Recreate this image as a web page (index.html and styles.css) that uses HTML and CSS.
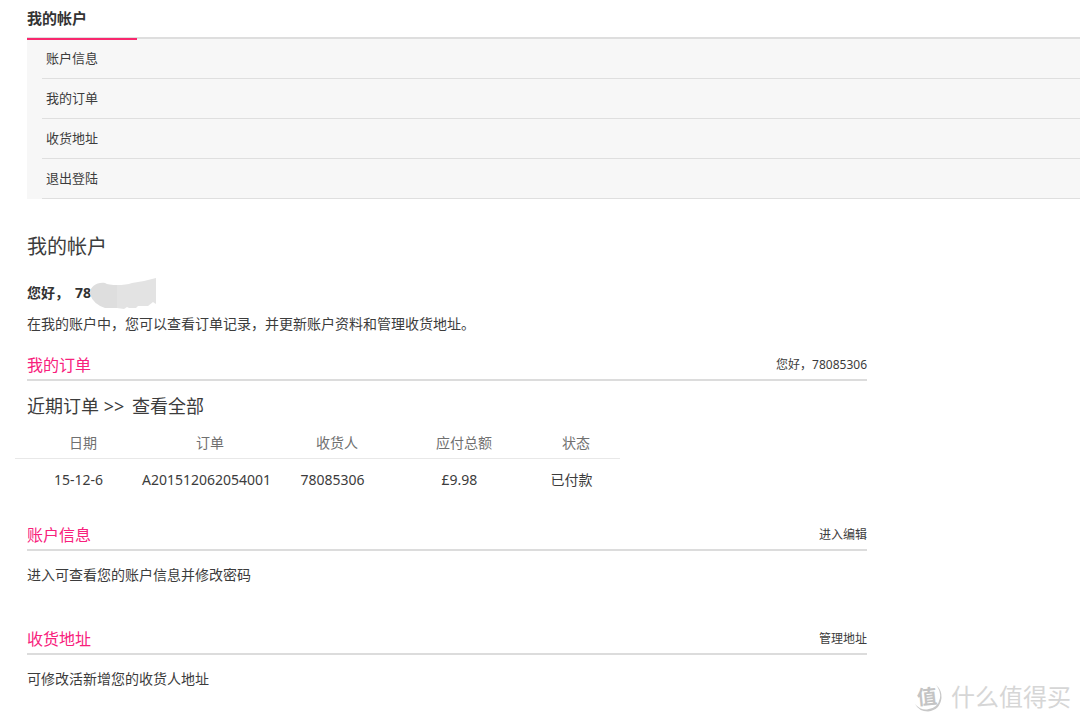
FILE: index.html
```html
<!DOCTYPE html>
<html lang="zh-CN">
<head>
<meta charset="utf-8">
<title>我的帐户</title>
<link rel="stylesheet" href="styles.css">
</head>
<body>
<nav class="side" aria-label="我的帐户">
  <div class="side-head"><span class="side-tab">我的帐户</span></div>
  <ul class="side-list">
    <li><a href="#info">账户信息</a></li>
    <li><a href="#orders">我的订单</a></li>
    <li><a href="#address">收货地址</a></li>
    <li><a href="#logout">退出登陆</a></li>
  </ul>
</nav>
<main class="main">
  <h1 class="title">我的帐户</h1>
  <p class="hello">您好，<span class="masked">78<svg class="mask" width="68" height="32" viewBox="0 0 68 32" aria-hidden="true"><path fill="#dedede" d="M1 16C1 8 8 4 16 5Q19 7 29 7V30H16Q4 26 1 16Z"/><path fill="#e3e3e3" d="M28 7Q37 7 43 5L55 3L67 0V26L64 24L59 28L49 28L47 30H40L38 29L35 31L28 30Z"/></svg></span></p>
  <p class="text">在我的账户中，您可以查看订单记录，并更新账户资料和管理收货地址。</p>

  <section class="orders" id="orders">
    <header class="bar"><h2>我的订单</h2><span class="bar-side">您好，78085306</span></header>
    <h3 class="recent">近期订单 &gt;&gt; <a href="#all">查看全部</a></h3>
    <table class="table">
      <thead><tr><th>日期</th><th>订单</th><th>收货人</th><th>应付总额</th><th class="state">状态</th></tr></thead>
      <tbody><tr><td>15-12-6</td><td>A201512062054001</td><td>78085306</td><td>£9.98</td><td>已付款</td></tr></tbody>
    </table>
  </section>

  <section class="block" id="info">
    <header class="bar"><h2>账户信息</h2><a class="bar-side" href="#edit">进入编辑</a></header>
    <p class="text">进入可查看您的账户信息并修改密码</p>
  </section>

  <section class="block" id="address">
    <header class="bar"><h2>收货地址</h2><a class="bar-side" href="#manage">管理地址</a></header>
    <p class="text">可修改活新增您的收货人地址</p>
  </section>
</main>
<div class="watermark">
  <svg class="seal" width="30" height="32" viewBox="0 0 30 32" role="img" aria-label="值">
    <path fill="#c8c8c8" d="M23 4Q29 9 28.500 17Q27 29 15 30.500Q6 30.500 2 23Q7 29 14 28.500Q25 27.500 27 17Q28 10 23 4Z"/>
    <text x="14" y="23" text-anchor="middle" transform="rotate(-6 14 16)">值</text>
  </svg>
  <span class="brand">什么值得买</span>
</div>
</body>
</html>
```
FILE: styles.css
```css
* { box-sizing: border-box; }
body {
  margin: 0;
  padding-left: 27px;
  background: #fff;
  color: #3c3c3c;
  font: 14px/24px "Noto Sans", "Noto Sans CJK SC", sans-serif;
}
h1, h2, h3, p, ul { margin: 0; padding: 0; font-weight: 400; }
a { color: inherit; text-decoration: none; }

.side-head {
  border-bottom: 2px solid #dedede;
  color: #333;
  font-size: 15px;
  font-weight: 700;
  line-height: 37px;
}
.side-tab { position: relative; display: block; width: 110px; }
.side-tab::after {
  content: "";
  position: absolute;
  left: 0;
  right: 0;
  bottom: -3px;
  height: 2px;
  background: #f8286e;
}
.side-list { padding-left: 15px; background: #f7f7f7; list-style: none; }
.side-list li {
  padding-left: 4px;
  border-bottom: 1px solid #dfdfdf;
  font-size: 13px;
  line-height: 39px;
}
.side-list a { display: block; }

.main { max-width: 840px; padding-top: 36px; }
.title { font-size: 20px; }
.hello { margin: 22px 0 7px; color: #333; font-weight: 700; }
.masked { position: relative; margin-left: 6px; }
.mask { position: absolute; left: 14px; top: -5px; }

.bar {
  display: flex;
  justify-content: space-between;
  border-bottom: 2px solid #dcdcdc;
  line-height: 28px;
}
.bar h2 { color: #f8207c; font-size: 16px; }
.bar-side { font-size: 12px; }
.orders { margin: 15px 0 20px; }
.recent { margin: 13px 0 9px; font-size: 18px; }
.recent a { margin-left: 3px; }
.table {
  width: 605px;
  margin-left: -12px;
  border-collapse: collapse;
  table-layout: fixed;
  text-align: center;
}
.table th {
  padding: 0 0 0 9px;
  border-bottom: 1px solid #e8e8e8;
  color: #707070;
  font-weight: 400;
  line-height: 31px;
}
.table td { padding: 0; line-height: 42px; }
.table .state { width: 97px; }
.block { margin-bottom: 38px; }
.block:last-child { margin-bottom: 20px; }
.block .bar { margin-bottom: 12px; }

.watermark {
  position: absolute;
  right: 9px;
  bottom: 9px;
  display: flex;
  align-items: center;
  gap: 8px;
}
.seal { overflow: visible; }
.seal text { fill: #c4c4c4; font-size: 20px; font-weight: 700; }
.brand {
  color: #d6d6d6;
  font-size: 24px;
  line-height: 32px;
}
```
